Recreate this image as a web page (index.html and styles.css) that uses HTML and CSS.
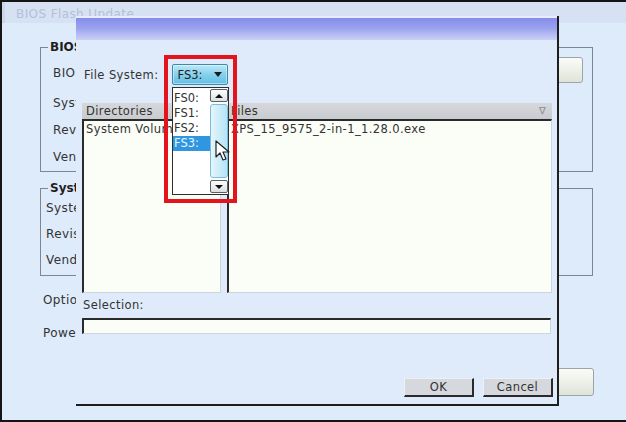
FILE: index.html
```html
<!DOCTYPE html>
<html lang="en">
<head>
    <meta charset="UTF-8">
    <title>BIOS Flash Update</title>
    <link rel="stylesheet" href="styles.css">
</head>
<body>
    <div class="screen">
        <div class="app-title">BIOS Flash Update</div>
        <div class="app-body">
            <fieldset class="group group-bios">
                <legend>BIOS Information</legend>
                <div class="group-row group-row-first">
                    <span>BIOS Update File:</span>
                    <button class="app-btn app-btn-browse">Browse...</button>
                </div>
                <div class="group-row">System:</div>
                <div class="group-row">Revision:</div>
                <div class="group-row">Vendor:</div>
            </fieldset>
            <fieldset class="group group-sys">
                <legend>System BIOS Information</legend>
                <div class="group-row">System:</div>
                <div class="group-row">Revision:</div>
                <div class="group-row">Vendor:</div>
            </fieldset>
            <div class="opt opt-first">Options:</div>
            <div class="opt">Power Status:</div>
            <div class="app-actions">
                <button class="app-btn app-btn-begin">Begin Flash Update</button>
            </div>
        </div>

        <div class="dialog">
            <div class="dialog-title"></div>
            <div class="dialog-body">
                <div class="fs-row">
                    <span class="fs-label">File System:</span>
                    <div class="fs-select">
                        <span>FS3:</span>
                        <span class="fs-caret"></span>
                    </div>
                </div>

                <div class="panels">
                    <div class="panel panel-dirs">
                        <div class="panel-head">Directories</div>
                        <div class="panel-list">
                            <div class="panel-item">System Volume Information</div>
                        </div>
                    </div>
                    <div class="panel panel-files">
                        <div class="panel-head">
                            <span>Files</span>
                            <span class="panel-filter">&#8711;</span>
                        </div>
                        <div class="panel-list">
                            <div class="panel-item">XPS_15_9575_2-in-1_1.28.0.exe</div>
                        </div>
                    </div>
                </div>

                <div class="sel-label">Selection:</div>
                <div class="sel-input"></div>

                <div class="dialog-actions">
                    <button class="dlg-btn">OK</button>
                    <button class="dlg-btn">Cancel</button>
                </div>
            </div>

            <!-- open drop-down list of the file system picker -->
            <div class="fs-popup">
                <div class="fs-options">
                    <div class="fs-option">FS0:</div>
                    <div class="fs-option">FS1:</div>
                    <div class="fs-option">FS2:</div>
                    <div class="fs-option fs-option-active">FS3:</div>
                </div>
                <div class="fs-scroll">
                    <div class="fs-scroll-btn"><span class="tri-up"></span></div>
                    <div class="fs-scroll-thumb"></div>
                    <div class="fs-scroll-btn"><span class="tri-down"></span></div>
                </div>
            </div>

            <div class="highlight"></div>

            <svg class="cursor" width="16" height="22" viewBox="0 0 16 22">
                <path d="M1 1 L1 17 L5 13 L8 20 L11 19 L8 12 L14 12 Z" fill="#fff" stroke="#222" stroke-width="1.2" stroke-linejoin="round"/>
            </svg>
        </div>
    </div>
</body>
</html>
```

FILE: styles.css
```css
body {
    margin: 0;
    background: #deebfb;
    font-family: "DejaVu Sans", Verdana, sans-serif;
    font-size: 11.5px;
    letter-spacing: 0.4px;
    color: #333;
}
.screen {
    position: relative;
    width: 626px;
    height: 422px;
    box-sizing: border-box;
    border: 2px solid #151515;
    border-right: 0;
    background: #deebfb;
    overflow: hidden;
}
.app-title {
    height: 21px;
    line-height: 25px;
    padding-left: 11px;
    background: #d6e2f3;
    border-left: 3px solid #cdd8e7;
    color: #b3c0d8;
    font-size: 12px;
    overflow: hidden;
}
.app-body {
    padding: 17px 33px 0 38px;
}
.group {
    margin: 0;
    border: 1px solid #80868f;
    min-width: 0;
}
.group legend {
    padding: 0 2px;
    line-height: 14px;
    font-size: 12px;
    font-weight: bold;
    letter-spacing: 0;
    color: #1e1e1e;
}
.group-bios {
    padding: 3px 9px 1px 12px;
}
.group-bios legend {
    margin-left: -5px;
}
.group-sys {
    margin-top: 9px;
    padding: 0 9px 2px 5px;
}
.group-sys legend {
    margin-left: 2px;
}
.group-row {
    height: 27px;
    display: flex;
    align-items: center;
    font-size: 12px;
    color: #333;
}
.group-sys .group-row {
    height: 26px;
}
.group-row-first {
    height: 32px;
    justify-content: space-between;
    align-items: flex-start;
}
.group-row-first span {
    line-height: 32px;
}
.app-btn {
    height: 26px;
    border: 1px solid #9ea3a8;
    border-radius: 3px;
    background: linear-gradient(#fbfcf8, #dfe4d8);
    font-family: inherit;
    font-size: 11px;
    color: #333;
}
.app-btn-browse {
    width: 110px;
}
.opt {
    height: 24px;
    line-height: 24px;
    padding-left: 3px;
    font-size: 12px;
    margin-top: 9px;
}
.opt-first {
    margin-top: 12px;
}
.app-actions {
    display: flex;
    justify-content: flex-end;
    margin-top: 23px;
    margin-right: -1px;
}
.app-btn-begin {
    width: 260px;
    height: 28px;
}

/* file picker dialog */
.dialog {
    position: absolute;
    left: 74px;
    top: 14px;
    width: 483px;
    height: 390px;
    box-sizing: border-box;
    background: #dfebfa;
    border-right: 2px solid #1e1e1e;
    border-bottom: 2px solid #1e1e1e;
}
.dialog-title {
    height: 22px;
    border-top: 2px solid #e9edfb;
    background: linear-gradient(#848dea, #9aa1ee 45%, #cbd0f6);
}
.dialog-body {
    padding: 0 5px 0 6px;
}
.fs-row {
    display: flex;
    align-items: center;
    gap: 14px;
    height: 21px;
    margin-top: 24px;
    padding-left: 2px;
}
.fs-label {
    color: #333;
}
.fs-select {
    width: 56px;
    height: 21px;
    box-sizing: border-box;
    display: flex;
    align-items: center;
    justify-content: space-between;
    padding: 0 5px 0 4px;
    border: 1px solid #3a8aaa;
    border-radius: 2px;
    background: linear-gradient(#bde8f7, #86d0ec 50%, #62bfe4);
    box-shadow: inset 0 0 0 1px rgba(255, 255, 255, 0.45);
    color: #222;
    letter-spacing: 0;
}
.fs-caret {
    width: 0;
    height: 0;
    border-left: 4px solid transparent;
    border-right: 4px solid transparent;
    border-top: 5px solid #1a1a1a;
}
.panels {
    display: flex;
    gap: 6px;
    height: 190px;
    margin-top: 18px;
}
.panel {
    display: flex;
    flex-direction: column;
}
.panel-dirs {
    width: 139px;
}
.panel-files {
    flex: 1;
}
.panel-head {
    height: 16px;
    line-height: 16px;
    padding: 0 6px 0 4px;
    display: flex;
    justify-content: space-between;
    background: linear-gradient(#d6d8db, #c8cbcf);
    color: #333;
}
.panel-filter {
    color: #8b9097;
    font-size: 10px;
}
.panel-list {
    flex: 1;
    background: #fbfdf7;
    border-top: 2px solid #2a2a2a;
    border-left: 2px solid #2a2a2a;
    border-right: 1px solid #ccd6e0;
    border-bottom: 1px solid #ccd6e0;
    overflow: hidden;
}
.panel-item {
    height: 16px;
    line-height: 16px;
    padding-left: 2px;
    white-space: nowrap;
    color: #333;
}
.sel-label {
    height: 16px;
    line-height: 16px;
    margin-top: 4px;
    padding-left: 1px;
}
.sel-input {
    height: 16px;
    width: 469px;
    box-sizing: border-box;
    margin-top: 5px;
    background: #fbfdf7;
    border-top: 2px solid #2a2a2a;
    border-left: 2px solid #2a2a2a;
    border-right: 1px solid #ccd6e0;
    border-bottom: 1px solid #ccd6e0;
}
.dialog-actions {
    display: flex;
    justify-content: flex-end;
    gap: 9px;
    margin-top: 44px;
    margin-right: -1px;
}
.dlg-btn {
    width: 70px;
    height: 19px;
    padding: 0;
    background: #d5d8dd;
    border: 1px solid #eef0f2;
    border-right: 2px solid #2a2a2a;
    border-bottom: 2px solid #2a2a2a;
    font-family: inherit;
    font-size: 11.5px;
    letter-spacing: 0.4px;
    color: #333;
}

/* drop-down list overlay */
.fs-popup {
    position: absolute;
    left: 96px;
    top: 71px;
    width: 57px;
    height: 108px;
    box-sizing: border-box;
    display: flex;
    background: #fff;
    border: 1px solid #2f2f2f;
    letter-spacing: 0;
}
.fs-options {
    flex: 1;
    padding-top: 3px;
}
.fs-option {
    height: 15px;
    line-height: 15px;
    padding-left: 1px;
    color: #333;
}
.fs-option-active {
    background: #2f96df;
    color: #e6f6ff;
}
.fs-scroll {
    width: 18px;
    display: flex;
    flex-direction: column;
    gap: 2px;
    padding: 1px 0;
}
.fs-scroll-btn {
    height: 11px;
    display: flex;
    align-items: center;
    justify-content: center;
    background: linear-gradient(#fdfdfd, #dcdfe2);
    border: 1px solid #5a5f66;
    border-radius: 2px;
}
.fs-scroll-thumb {
    flex: 1;
    background: linear-gradient(to right, #e4f6fd, #b5e4f7);
    border: 1px solid #7fbcdb;
    border-radius: 3px;
}
.tri-up,
.tri-down {
    width: 0;
    height: 0;
    border-left: 4px solid transparent;
    border-right: 4px solid transparent;
}
.tri-up {
    border-bottom: 4px solid #111;
}
.tri-down {
    border-top: 4px solid #111;
}
.highlight {
    position: absolute;
    left: 88px;
    top: 39px;
    width: 73px;
    height: 148px;
    box-sizing: border-box;
    border: 4px solid #e3141c;
}
.cursor {
    position: absolute;
    left: 139px;
    top: 124px;
}
```
